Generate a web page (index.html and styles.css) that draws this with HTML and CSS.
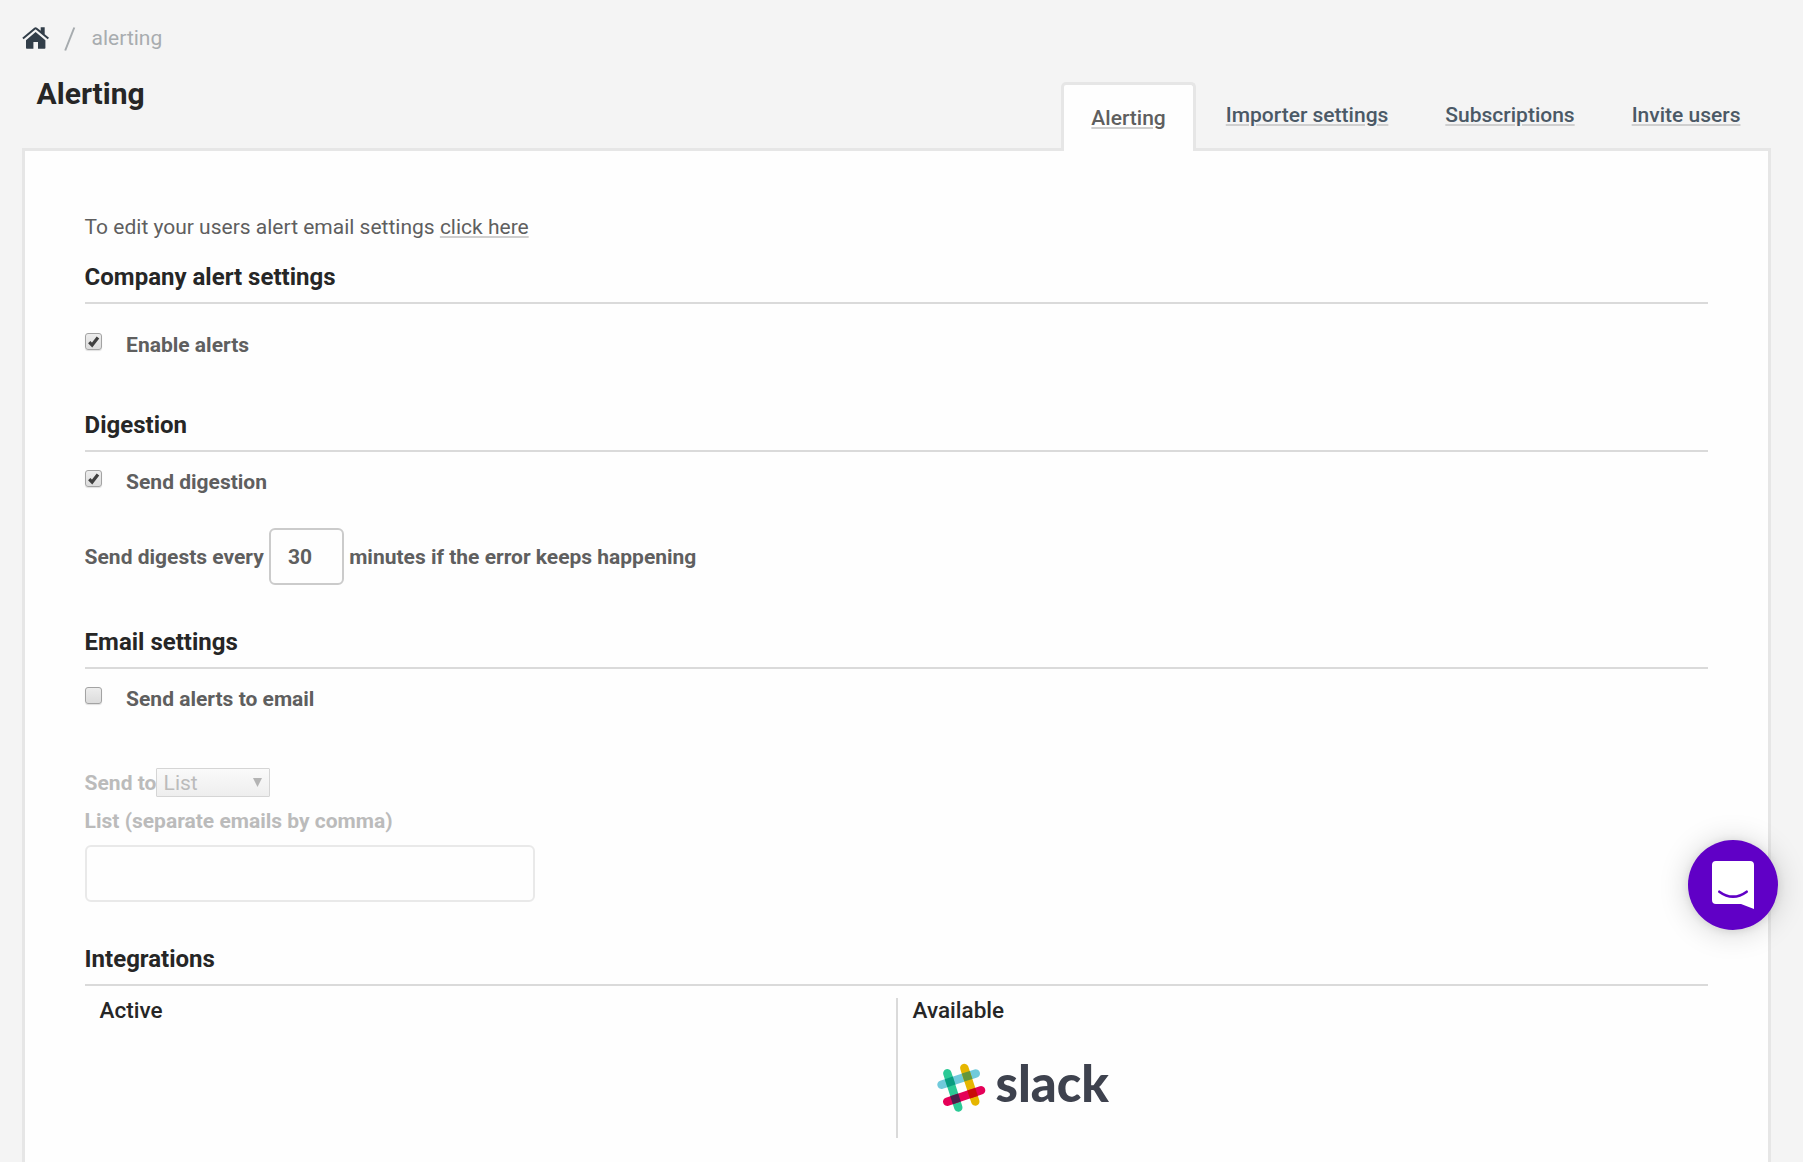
FILE: index.html
```html
<!DOCTYPE html>
<html lang="en">
<head>
<meta charset="utf-8">
<title>Alerting</title>
<link rel="stylesheet" href="styles.css">
</head>
<body>
<div class="page">
  <nav class="breadcrumb">
    <svg class="home" width="28" height="24" viewBox="0 0 28 24"><path d="M4 14.2 13.6 6 23.400 14.200V22a.8.8 0 0 1-.8.8H16V16h-4.600v6.800H4.800A.8.8 0 0 1 4 22z"/><path d="M.3 11.800 12.300 1.700q1.300-1 2.600 0L18.700 4.800V1.300H22.700V8.200L27 11.800 25.700 13.300 13.600 3.200 1.600 13.300z"/></svg>
    <svg class="slash" width="12" height="24" viewBox="0 0 12 24"><path d="M1.200 23.500 10.300.5"/></svg>
    <span class="crumb">alerting</span>
  </nav>
  <header class="head">
    <h1 class="title">Alerting</h1>
    <ul class="tabs">
      <li class="tab tab-active"><a class="link">Alerting</a></li>
      <li class="tab"><a class="link">Importer settings</a></li>
      <li class="tab"><a class="link">Subscriptions</a></li>
      <li class="tab"><a class="link">Invite users</a></li>
    </ul>
  </header>
  <main class="panel">
    <p class="intro">To edit your users alert email settings <a class="link">click here</a></p>

    <h2 class="heading">Company alert settings</h2>
    <label class="check check-first"><span class="box"><svg class="tick" width="17" height="17" viewBox="0 0 16 16"><path d="M4 8.500 6.700 11.300 12.200 4.200"/></svg></span>Enable alerts</label>

    <h2 class="heading heading-digest">Digestion</h2>
    <label class="check"><span class="box"><svg class="tick" width="17" height="17" viewBox="0 0 16 16"><path d="M4 8.500 6.700 11.300 12.200 4.200"/></svg></span>Send digestion</label>
    <div class="interval"><span>Send digests every</span><span class="number">30</span><span>minutes if the error keeps happening</span></div>

    <h2 class="heading heading-late">Email settings</h2>
    <label class="check"><span class="box"></span>Send alerts to email</label>
    <div class="disabled">
      <div class="sendto"><span class="sendto-label">Send to</span><span class="select"><span>List</span><svg width="9" height="9" viewBox="0 0 9 9"><path d="M0 0H9L4.500 9z"/></svg></span></div>
      <div class="list-label">List (separate emails by comma)</div>
      <div class="emails"></div>
    </div>

    <h2 class="heading heading-late">Integrations</h2>
    <div class="columns">
      <section class="column"><h3 class="sub">Active</h3></section>
      <section class="column column-available">
        <h3 class="sub">Available</h3>
        <svg class="slack" width="176" height="52" viewBox="0 0 176 52">
          <g stroke-width="8.400" stroke-linecap="round">
            <path stroke="#70cadb" d="M4.500 22.700 38.800 11.500"/>
            <path stroke="#e6b600" d="M27.300 5.900 38.300 39.500"/>
            <path stroke="#2bc995" d="M10.300 11.300 21.300 45.500"/>
            <path stroke="#e50058" d="M10.200 39.700 44.100 28.300"/>
          </g>
          <rect x="-4.200" y="-4.200" width="8.400" height="8.400" fill="#099c80" transform="translate(13.1 19.9) rotate(-18)"/>
          <rect x="-4.200" y="-4.200" width="8.400" height="8.400" fill="#65973a" transform="translate(30.1 14.3) rotate(-18)"/>
          <rect x="-4.200" y="-4.200" width="8.400" height="8.400" fill="#4a1f4b" transform="translate(18.500 36.9) rotate(-18)"/>
          <rect x="-4.200" y="-4.200" width="8.400" height="8.400" fill="#c90a08" transform="translate(35.600 31.200) rotate(-18)"/>
          <text class="wordmark" x="58.500" y="39.500" textLength="113.500" lengthAdjust="spacingAndGlyphs">slack</text>
        </svg>
      </section>
    </div>
  </main>
  <div class="chat"><svg width="44" height="50" viewBox="0 0 44 50"><path fill="#fff" d="M4 1H39a4 4 0 0 1 4 4V49L30 44H5a4 4 0 0 1-4-4V5a4 4 0 0 1 4-4z"/><path class="smile" d="M8.300 31.700q13.700 10 27.400 0"/></svg></div>
</div>
</body>
</html>
```
FILE: styles.css
```css
* { box-sizing: border-box; }
body {
  margin: 0;
  background: #f4f4f4;
  font: 400 21px/30px Roboto, sans-serif;
  color: #5f5f5f;
}
h1, h2, h3, p, ul { margin: 0; padding: 0; }
.page {
  height: 1162px;
  overflow: hidden;
  padding: 0 32px 0 21.600px;
  display: flex;
  flex-direction: column;
}
.breadcrumb {
  display: flex;
  align-items: flex-start;
  height: 70px;
  flex: none;
  padding-top: 23px;
}
.home { fill: #323e49; margin-top: 3px; }
.slash { margin: 4px 0 0 14px; fill: none; stroke: #a6abae; stroke-width: 2; }
.crumb { margin-left: 16px; color: #a8acaf; }
.head {
  display: flex;
  justify-content: space-between;
  height: 81px;
  flex: none;
  position: relative;
  z-index: 1;
}
.title {
  margin: 6px 0 0 15px;
  font-size: 30px;
  line-height: 36px;
  height: 36px;
  font-weight: 700;
  color: #262626;
}
.tabs {
  display: flex;
  align-items: flex-start;
  list-style: none;
  padding-right: 2px;
}
.tab {
  margin-top: 30px;
  padding: 0 28.500px;
  font-weight: 500;
  color: #4b5966;
  white-space: nowrap;
}
.tab-active {
  margin-top: 12px;
  margin-right: 1.500px;
  height: 69px;
  padding: 18px 27px 0;
  border: 3px solid #e6e6e6;
  border-bottom: 0;
  border-radius: 5px 5px 0 0;
  background: #fefefe;
  color: #5f5f5f;
}
.link {
  text-decoration: underline;
  text-decoration-color: #cfcfcf;
  text-decoration-thickness: 2px;
  text-underline-offset: 2px;
}
.panel {
  margin-top: -3px;
  flex: none;
  height: 1100px;
  padding: 61px 60px 0;
  border: 3px solid #e6e6e6;
  background: #fefefe;
}
.heading {
  margin-top: 20px;
  padding-bottom: 10px;
  border-bottom: 2px solid #dadada;
  font-size: 24px;
  line-height: 30px;
  font-weight: 700;
  color: #262626;
}
.heading-digest { margin-top: 50px; }
.heading-late { margin-top: 42px; }
.check {
  display: flex;
  align-items: flex-start;
  gap: 24.500px;
  margin-top: 15px;
  font-weight: 700;
}
.check-first { margin-top: 26px; }
.box {
  width: 17px;
  height: 17px;
  margin-top: 3px;
  border: 1px solid #a3a3a3;
  border-radius: 3px;
  background: linear-gradient(#ededed, #dcdcdc);
  box-shadow: 0 1px 1px #0000001f;
}
.tick { display: block; margin: -1px; fill: none; stroke: #3f3f3f; stroke-width: 3; }
.interval {
  display: flex;
  align-items: center;
  gap: 5.200px;
  height: 57px;
  margin-top: 31px;
  font-weight: 700;
}
.number {
  width: 75px;
  height: 57px;
  padding: 12px 0 0 17px;
  border: 2px solid #cbcbcb;
  border-radius: 6px;
}
.disabled { margin-top: 54px; font-weight: 700; color: #bbb; }
.sendto { display: flex; align-items: center; height: 29px; }
.sendto-label { width: 71px; white-space: nowrap; }
.select {
  display: flex;
  align-items: center;
  justify-content: space-between;
  width: 114px;
  height: 29px;
  padding: 0 7px;
  border: 1px solid #d5d5d5;
  border-radius: 1px;
  background: linear-gradient(#fafafa, #eee);
  font-weight: 400;
}
.select svg { fill: #b4b4b4; }
.list-label { margin-top: 9px; }
.emails {
  margin-top: 9px;
  width: 450px;
  height: 57px;
  border: 2px solid #e9e9e9;
  border-radius: 6px;
}
.columns { display: flex; margin-top: 12px; height: 140px; }
.column { width: 811px; padding-left: 15px; }
.column-available { border-left: 2px solid #dadada; }
.sub { font-size: 22.500px; line-height: 25px; font-weight: 500; color: #262626; }
.slack { display: block; margin: 39px 0 0 24px; overflow: visible; }
.wordmark { font: 900 51px Lato, sans-serif; fill: #3e424e; }
.chat {
  position: absolute;
  left: 1688px;
  top: 840px;
  z-index: 2;
  width: 90px;
  height: 90px;
  padding: 20px 0 0 23px;
  border-radius: 50%;
  background: #6000c6;
  box-shadow: 0 2px 30px #0000002e, 0 1px 8px #00000018;
}
.chat svg { display: block; }
.smile { fill: none; stroke: #6000c6; stroke-width: 2.600; stroke-linecap: round; }
```
